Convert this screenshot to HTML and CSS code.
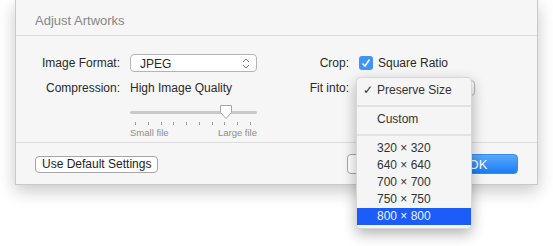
FILE: index.html
```html
<!DOCTYPE html>
<html lang="en">
<head>
  <meta charset="UTF-8">
  <title>Adjust Artworks</title>
  <link rel="stylesheet" href="styles.css">
</head>
<body>
  <div class="sheet">
    <div class="sheet-title">Adjust Artworks</div>
    <div class="form">
      <label class="lbl">Image Format:</label>
      <div class="popup">
        <span>JPEG</span>
        <svg class="chev" width="8" height="11" viewBox="0 0 8 11"><path d="M1 4 L4 1 L7 4 M1 7 L4 10 L7 7" fill="none" stroke="#777" stroke-width="1"/></svg>
      </div>
      <label class="lbl">Crop:</label>
      <div class="check-row">
        <span class="checkbox"><svg width="10" height="10" viewBox="0 0 10 10"><path d="M1.5 5.5 L4 8 L8.5 1.5" fill="none" stroke="#fff" stroke-width="1.6"/></svg></span>
        <span>Square Ratio</span>
      </div>

      <label class="lbl">Compression:</label>
      <div class="value">High Image Quality</div>
      <label class="lbl">Fit into:</label>
      <div class="popup fit"></div>

      <div></div>
      <div class="slider">
        <div class="track">
          <svg class="knob" width="14" height="16" viewBox="0 0 14 16"><path d="M1.5 1.5 H12.5 V8.5 L7 14.5 L1.5 8.5 Z" fill="#fff" stroke="#a8a8a8" stroke-width="1"/></svg>
        </div>
        <div class="ticks">
          <i></i><i></i><i></i><i></i><i></i><i></i><i></i><i></i><i></i><i></i>
        </div>
        <div class="slider-labels"><span>Small file</span><span>Large file</span></div>
      </div>
    </div>
    <div class="footer">
      <button class="btn">Use Default Settings</button>
      <div class="footer-right">
        <button class="btn cancel">Cancel</button>
        <button class="btn primary">OK</button>
      </div>
    </div>

    <div class="menu">
      <div class="item"><span class="tick">✓</span>Preserve Size</div>
      <div class="sep"></div>
      <div class="item">Custom</div>
      <div class="sep"></div>
      <div class="item">320 × 320</div>
      <div class="item">640 × 640</div>
      <div class="item">700 × 700</div>
      <div class="item">750 × 750</div>
      <div class="item active">800 × 800</div>
    </div>
  </div>
</body>
</html>
```

FILE: styles.css
```css
* { box-sizing: border-box; }
html, body { height: 100%; }
body { margin: 0; min-height: 246px; background: #fff; font-family: "Liberation Sans", Arial, sans-serif; font-size: 12px; color: #2a2a2a; }

.sheet { position: relative; margin-left: 15px; width: 523px; height: 185px; background: #f6f6f6; border: 1px solid #c9c9c9; border-top: none; box-shadow: 0 6px 16px rgba(0,0,0,0.22); display: flex; flex-direction: column; }
.sheet-title { height: 36px; padding: 13px 0 0 19px; color: #878787; font-size: 13px; border-bottom: 1px solid #dcdcdc; }

.form { display: grid; grid-template-columns: 104px 127px 82px auto; column-gap: 10px; grid-template-rows: 18px 18px auto; row-gap: 7px; padding-top: 18px; align-items: center; }
.lbl { text-align: right; white-space: nowrap; }
.value { white-space: nowrap; }

.popup { position: relative; height: 18px; background: #fff; border: 1px solid #b4b4b4; border-radius: 4px; padding: 1px 0 0 9px; display: flex; align-items: center; justify-content: space-between; }
.popup .chev { margin-right: 6px; }
.popup.fit { width: 116px; height: 16px; }

.check-row { display: flex; align-items: center; gap: 5px; }
.checkbox { width: 14px; height: 14px; border-radius: 3px; background: #3d96f7; display: flex; align-items: center; justify-content: center; }

.slider { grid-column: 2; margin-top: -1px; }
.track { position: relative; height: 3px; margin-top: 8px; background: #c9c9c9; border-radius: 2px; }
.knob { position: absolute; left: 89px; top: -7px; }
.ticks { display: flex; justify-content: space-between; padding: 0 6px 0 5px; margin-top: 8px; }
.ticks i { width: 1px; height: 3px; background: #9a9a9a; }
.slider-labels { display: flex; justify-content: space-between; font-size: 9.5px; color: #8e8e8e; margin-top: 2px; }

.footer { margin-top: auto; height: 42px; border-top: 1px solid #dcdcdc; display: flex; align-items: center; justify-content: space-between; padding: 2px 19px 0 19px; }
.footer-right { display: flex; gap: 8px; margin-top: -1px; }
.btn { font-family: inherit; font-size: 12px; color: #222; height: 17px; padding: 0 6px; background: #fff; border: 1px solid #a5a5a5; border-radius: 4px; line-height: 15px; }
.btn.cancel { width: 83px; height: 20px; }
.btn.primary { width: 80px; height: 20px; color: #fff; border-color: #3a8af0; background: linear-gradient(#5aa9fb, #1b7cf3); font-size: 13px; }

.menu { position: absolute; left: 340px; top: 77px; width: 116px; padding: 4px 0 3px; background: #f5f5f5; border: 1px solid rgba(0,0,0,0.12); border-radius: 5px; box-shadow: 0 5px 14px rgba(0,0,0,0.3); z-index: 2; }
.item { position: relative; height: 17px; line-height: 17px; padding-left: 20px; color: #333; font-size: 12px; white-space: nowrap; }
.item .tick { position: absolute; left: 6px; }
.item.active { background: #1c5cf8; color: #f0f4ff; }
.sep { height: 2px; background: #e2e2e2; margin: 6px 0 4px; }
```
